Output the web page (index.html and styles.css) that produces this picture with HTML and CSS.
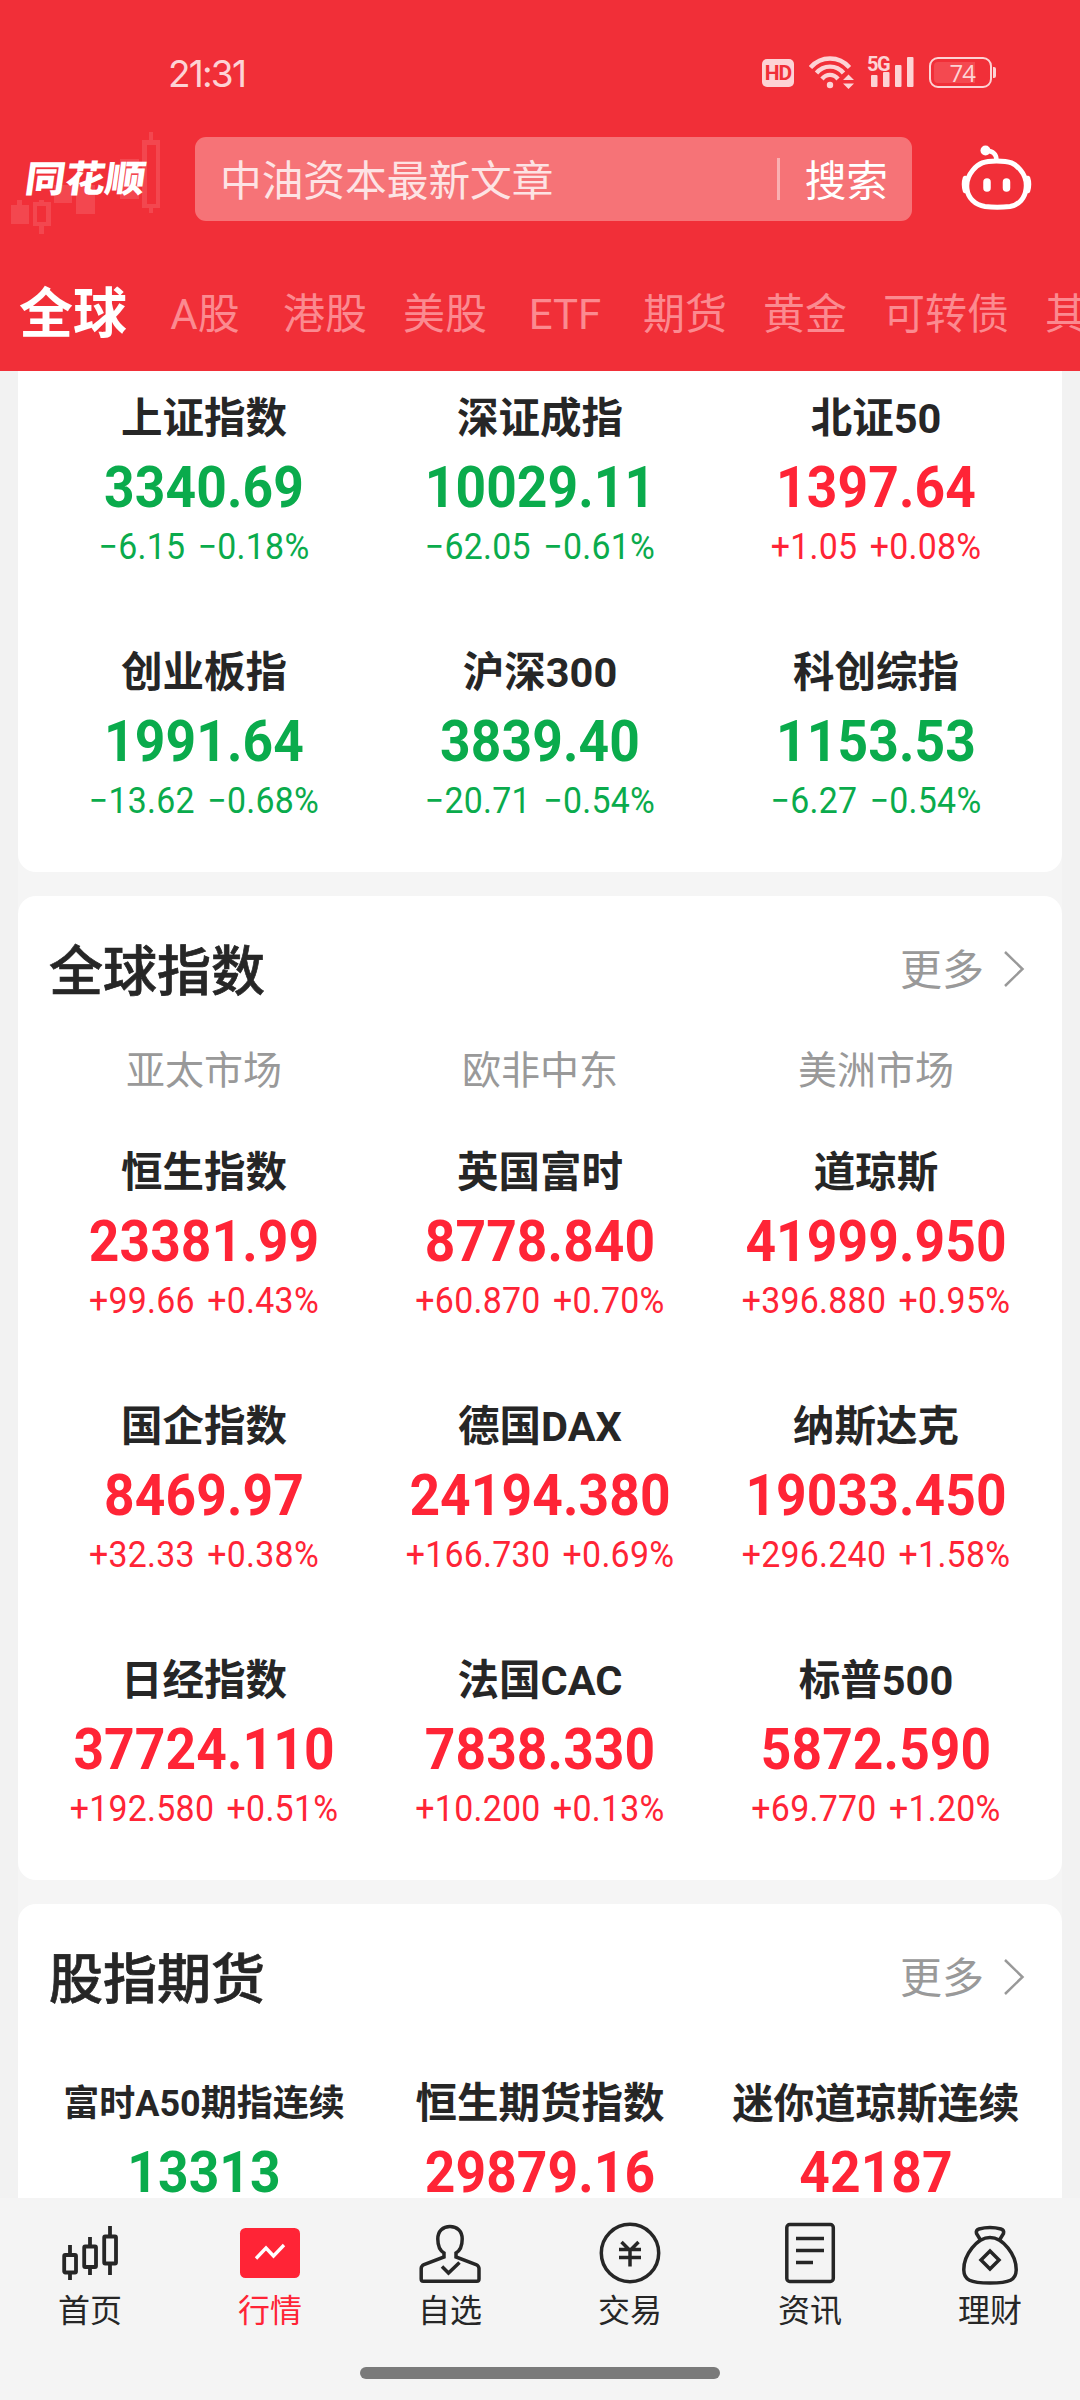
FILE: index.html
```
<!DOCTYPE html>
<html lang="zh-CN">
<head>
    <meta charset="UTF-8">
    <meta name="viewport" content="width=device-width, initial-scale=1.0">
    <title>同花顺 - 行情</title>
    <link rel="stylesheet" href="styles.css">
</head>
<body>

<header class="header">
    <div class="status-bar">
        <span class="time">21:31</span>
        <div class="status-icons">
            <span class="hd">HD</span>
            <svg class="wifi" width="46" height="36" viewBox="0 0 46 36" fill="none" stroke="#fdd3d5" stroke-width="4.400">
                <path d="M1.500 13.500C12 1.500 30 1.500 40.500 13.500"/>
                <path d="M7.500 19C14.500 10.500 27.500 10.500 34.500 19"/>
                <path d="M13 25C17.500 19.500 24.500 19.500 29 25"/>
                <circle cx="21" cy="31" r="3.200" fill="#fdd3d5" stroke="none"/>
                <path d="M34 26L39.500 20.500L45 26ZM34 29.500L39.500 35L45 29.500Z" fill="#fdd3d5" stroke="none"/>
            </svg>
            <svg class="signal" width="48" height="34" viewBox="0 0 48 34" fill="#fdd3d5">
                <text class="signal-text" x="0" y="16.500">5G</text>
                <rect x="4" y="21" width="6.500" height="12" rx="1"/>
                <rect x="16" y="18" width="6.500" height="15" rx="1"/>
                <rect x="28" y="11" width="6.500" height="22" rx="1"/>
                <rect x="40" y="3" width="6.500" height="30" rx="1"/>
            </svg>
            <span class="battery"><span class="battery-level">74</span></span>
        </div>
    </div>

    <div class="search-row">
        <div class="logo">
            <svg class="logo-bg" width="165" height="110" viewBox="0 0 165 110" fill="#f3474f">
                <path d="M11 74h6v-5h5v5h7v19H11z"/>
                <path d="M33 71h6v-2h5v2h7v24h-7v8h-5v-8h-6zM37 75v16h9V75z" fill-rule="evenodd"/>
                <path d="M54 54h18v18H54zM76 54h19v29H76zM120 28h19v40h-19z"/>
                <path d="M142 9h7V1h4v8h7v68h-7v5h-4v-5h-7zM147 14v59h9V14z" fill-rule="evenodd"/>
            </svg>
            <span class="logo-text">同花顺</span>
        </div>
        <div class="search-box">
            <span class="search-hint">中油资本最新文章</span>
            <span class="divider"></span>
            <span class="search-btn">搜索</span>
        </div>
        <svg class="robot" width="72" height="66" viewBox="0 0 72 66" fill="none" stroke="#fff" stroke-width="5">
            <path d="M35.500 16C49 16 54 18 59.500 25C64.500 31 66 37 65 44C64 53 58 60 49 61.500Q36 63 24 61.500C14 60 7 53 6 44C5 37 7 31 12 25C18 18 23 16 35.500 16Z"/>
            <path d="M35.500 15C35.500 9.500 32 6 25 5.500" stroke-width="4.500"/>
            <circle cx="24.500" cy="5.500" r="5" fill="#fff" stroke="none"/>
            <path d="M4 33Q2 39 4 46M67 33Q69 39 67 46" stroke-width="4.500" stroke-linecap="round"/>
            <path d="M26 37v6M45.500 37v6" stroke-width="7.500" stroke-linecap="round"/>
        </svg>
    </div>

    <nav class="tabs">
        <span class="tab active">全球</span>
        <span class="tab">A股</span>
        <span class="tab">港股</span>
        <span class="tab">美股</span>
        <span class="tab">ETF</span>
        <span class="tab">期货</span>
        <span class="tab">黄金</span>
        <span class="tab">可转债</span>
        <span class="tab">其他</span>
    </nav>
</header>

<main class="content">
    <section class="card card-first">
        <div class="grid">
            <div class="item down"><div class="name">上证指数</div><div class="price">3340.69</div><div class="change">−6.15 −0.18%</div></div>
            <div class="item down"><div class="name">深证成指</div><div class="price">10029.11</div><div class="change">−62.05 −0.61%</div></div>
            <div class="item up"><div class="name">北证50</div><div class="price">1397.64</div><div class="change">+1.05 +0.08%</div></div>
            <div class="item down"><div class="name">创业板指</div><div class="price">1991.64</div><div class="change">−13.62 −0.68%</div></div>
            <div class="item down"><div class="name">沪深300</div><div class="price">3839.40</div><div class="change">−20.71 −0.54%</div></div>
            <div class="item down"><div class="name">科创综指</div><div class="price">1153.53</div><div class="change">−6.27 −0.54%</div></div>
        </div>
    </section>

    <section class="card">
        <div class="card-head">
            <h2>全球指数</h2>
            <span class="more"><span>更多</span>
                <svg width="22" height="38" viewBox="0 0 22 38" fill="none" stroke="#999" stroke-width="2.500"><path d="M2 2L19.500 19L2 36"/></svg>
            </span>
        </div>
        <div class="markets"><span>亚太市场</span><span>欧非中东</span><span>美洲市场</span></div>
        <div class="grid">
            <div class="item up"><div class="name">恒生指数</div><div class="price">23381.99</div><div class="change">+99.66 +0.43%</div></div>
            <div class="item up"><div class="name">英国富时</div><div class="price">8778.840</div><div class="change">+60.870 +0.70%</div></div>
            <div class="item up"><div class="name">道琼斯</div><div class="price">41999.950</div><div class="change">+396.880 +0.95%</div></div>
            <div class="item up"><div class="name">国企指数</div><div class="price">8469.97</div><div class="change">+32.33 +0.38%</div></div>
            <div class="item up"><div class="name">德国DAX</div><div class="price">24194.380</div><div class="change">+166.730 +0.69%</div></div>
            <div class="item up"><div class="name">纳斯达克</div><div class="price">19033.450</div><div class="change">+296.240 +1.58%</div></div>
            <div class="item up"><div class="name">日经指数</div><div class="price">37724.110</div><div class="change">+192.580 +0.51%</div></div>
            <div class="item up"><div class="name">法国CAC</div><div class="price">7838.330</div><div class="change">+10.200 +0.13%</div></div>
            <div class="item up"><div class="name">标普500</div><div class="price">5872.590</div><div class="change">+69.770 +1.20%</div></div>
        </div>
    </section>

    <section class="card card-last">
        <div class="card-head">
            <h2>股指期货</h2>
            <span class="more"><span>更多</span>
                <svg width="22" height="38" viewBox="0 0 22 38" fill="none" stroke="#999" stroke-width="2.500"><path d="M2 2L19.500 19L2 36"/></svg>
            </span>
        </div>
        <div class="grid">
            <div class="item down"><div class="name small">富时A50期指连续</div><div class="price">13313</div></div>
            <div class="item up"><div class="name">恒生期货指数</div><div class="price">29879.16</div></div>
            <div class="item up"><div class="name long">迷你道琼斯连续</div><div class="price">42187</div></div>
        </div>
    </section>
</main>

<footer class="footer">
    <nav class="nav">
        <a class="nav-item">
            <svg width="70" height="70" viewBox="0 0 70 70" fill="none" stroke="#262626" stroke-width="3.800">
                <path d="M15 25v10M15 53v7M35 17v9M35 48v7M55 6v10M55 45v10"/>
                <rect x="9.200" y="35" width="11.800" height="17.500" rx="1"/>
                <rect x="29.200" y="26.500" width="11.800" height="20.500" rx="1"/>
                <rect x="49.200" y="16.500" width="11.800" height="27" rx="1"/>
            </svg>
            <span>首页</span>
        </a>
        <a class="nav-item current">
            <svg width="70" height="70" viewBox="0 0 70 70" fill="none">
                <rect x="5" y="8" width="60" height="50" rx="5.500" fill="#ff2436"/>
                <path d="M21 38.500L31 28L38.500 36L49 25" stroke="#fff" stroke-width="3.300"/>
            </svg>
            <span>行情</span>
        </a>
        <a class="nav-item">
            <svg width="70" height="70" viewBox="0 0 70 70" fill="none" stroke="#262626" stroke-width="3.500">
                <path d="M29 37v-4C24 30 22.800 25 22.800 19C22.800 11 28 6.500 35 6.500S47.200 11 47.200 19C47.200 25 46 30 41 33v4L61 44.500Q64 46 64 48.500V59Q64 61.300 61.800 61.300H8.200Q6.200 61.300 6.200 59V48.500Q6.200 46 9 44.500Z"/>
                <path d="M27 46.500L33.500 53L44.500 42.500"/>
            </svg>
            <span>自选</span>
        </a>
        <a class="nav-item">
            <svg width="70" height="70" viewBox="0 0 70 70" fill="none" stroke="#262626" stroke-width="3.500">
                <circle cx="35" cy="33" r="28.700"/>
                <path d="M26.500 22L35 30.500L43.500 22M24 29.500H46M24 37.500H46M35 29V46.500"/>
            </svg>
            <span>交易</span>
        </a>
        <a class="nav-item">
            <svg width="70" height="70" viewBox="0 0 70 70" fill="none" stroke="#262626" stroke-width="3.500">
                <rect x="11.800" y="4.500" width="46.500" height="57" rx="3"/>
                <path d="M21 18.500H49M21 30.500H49M21 42.500H38"/>
            </svg>
            <span>资讯</span>
        </a>
        <a class="nav-item">
            <svg width="70" height="70" viewBox="0 0 70 70" fill="none" stroke="#262626" stroke-width="3.500">
                <path d="M25.500 20L21.500 13.500Q20.500 10 24 9Q35 6 46 9Q49.500 10 48.500 13.500L44.500 20"/>
                <path d="M35 17.500C48 17.500 61.500 35 61.200 50C61 60 55 63 35 63S9 60 8.800 50C8.500 35 22 17.500 35 17.500Z"/>
                <path d="M35 31L44 40L35 49L26 40Z"/>
            </svg>
            <span>理财</span>
        </a>
    </nav>
    <div class="home-bar"></div>
</footer>

</body>
</html>
```
FILE: styles.css
```
* {
    box-sizing: border-box;
}
body {
    margin: 0;
    width: 1080px;
    height: 2400px;
    display: flex;
    flex-direction: column;
    overflow: hidden;
    background: #f5f5f5;
    color: #262626;
    font-family: Roboto, "Noto Sans CJK SC", sans-serif;
}

/* Header */
.header {
    height: 371px;
    flex: none;
    background: #f12f38;
    color: #fff;
    overflow: hidden;
}
.status-bar {
    height: 131px;
    padding: 15px 84px 0 168px;
    display: flex;
    align-items: flex-start;
    justify-content: space-between;
    color: #fdd3d5;
}
.time {
    margin-top: 35px;
    font: 400 37px/48px Inter, sans-serif;
    letter-spacing: -1.8px;
}
.status-icons {
    display: flex;
    margin-top: 39px;
}
.hd {
    width: 32px;
    height: 28px;
    margin: 5px 15px 0 0;
    border-radius: 5px;
    background: #fdd3d5;
    color: #f12f38;
    font: 700 21px/29px Roboto, sans-serif;
    letter-spacing: -1px;
    text-align: center;
}
.wifi {
    margin-right: 12px;
}
.signal {
    margin-right: 14px;
    overflow: visible;
}
.signal-text {
    font: 700 20px Roboto, sans-serif;
    letter-spacing: -1.5px;
}
.battery {
    position: relative;
    width: 63px;
    height: 31px;
    margin: 3px 4px 0 0;
    padding: 3px;
    border: 2px solid #fdd3d5;
    border-radius: 9px;
}
.battery::after {
    content: "";
    position: absolute;
    right: -6px;
    top: 8px;
    width: 3px;
    height: 11px;
    border-radius: 0 2px 2px 0;
    background: #fdd3d5;
}
.battery-level {
    display: block;
    width: 41px;
    height: 21px;
    border-radius: 4px 0 0 4px;
    background: #f44950;
    font: 400 24px/22px "Open Sans", sans-serif;
    letter-spacing: -1px;
    text-align: right;
}
.search-row {
    display: flex;
    height: 110px;
}
.logo {
    position: relative;
    width: 195px;
    flex: none;
}
.logo-bg {
    position: absolute;
    left: 0;
    top: 0;
}
.logo-text {
    position: relative;
    display: block;
    width: 120px;
    margin: 19px 0 0 26px;
    font: 900 40px/52px "Noto Sans CJK SC", sans-serif;
    transform: skewX(-8deg) scaleY(0.92);
}
.search-box {
    width: 717px;
    height: 84px;
    margin-top: 6px;
    padding: 6px 24px 0 25px;
    display: flex;
    align-items: center;
    border-radius: 11px;
    background: #f67377;
    font-size: 41.7px;
    line-height: 78px;
}
.search-hint {
    flex: 1;
    color: #fde3e4;
}
.divider {
    width: 3px;
    height: 42px;
    margin: -6px 25px 0 0;
    background: #fab0b2;
}
.robot {
    margin: 14px 0 0 49px;
}
.tabs {
    display: flex;
    gap: 36px;
    height: 130px;
    padding-left: 19px;
    align-items: center;
    white-space: nowrap;
    font-size: 42px;
    line-height: 60px;
    color: #fb8a90;
}
.tab {
    flex: none;
    min-width: 84px;
    margin-top: 17px;
    text-align: center;
}
.tab.active {
    font-size: 54px;
    font-weight: 700;
    color: #fff;
}

/* Cards */
.content {
    flex: 1;
    min-height: 0;
    overflow: hidden;
    border-left: 18px solid #f2f2f2;
    border-right: 18px solid #f2f2f2;
}
.card {
    margin-bottom: 24px;
    padding: 0 18px 47px;
    border-radius: 18px;
    background: #fff;
}
.card-first {
    padding-top: 16px;
    border-radius: 0 0 18px 18px;
}
.card-head {
    height: 148px;
    padding: 0 19px 0 13px;
    display: flex;
    align-items: center;
    justify-content: space-between;
}
.card-head h2 {
    margin: 6px 0 0;
    font-size: 54px;
    font-weight: 500;
    line-height: 80px;
    -webkit-text-stroke: 0.7px #262626;
}
.more {
    display: flex;
    align-items: center;
    gap: 19px;
    font-size: 42px;
    line-height: 60px;
    color: #999;
}
.more > span {
    margin-top: 2px;
}
.more svg {
    margin-top: -3px;
}
.markets {
    display: grid;
    grid-template-columns: repeat(3, 336px);
    padding-top: 2px;
    margin-bottom: 45px;
    font-size: 39px;
    line-height: 50px;
    text-align: center;
    color: #999;
}
.grid {
    display: grid;
    grid-template-columns: repeat(3, 336px);
    row-gap: 70px;
}
.card-last .grid {
    margin-top: 20px;
}
.item {
    text-align: center;
    white-space: nowrap;
}
.name {
    height: 64px;
    font-size: 41.5px;
    font-weight: 700;
    line-height: 64px;
}
.name.small {
    font-size: 36px;
}
.name.long {
    font-size: 41px;
}
/* narrow numerals */
.price {
    font-size: 58px;
    font-weight: 700;
    line-height: 73px;
    letter-spacing: 0.1px;
    transform: scaleX(0.92);
}
.change {
    font-size: 36px;
    line-height: 47px;
    letter-spacing: 0.3px;
    word-spacing: 4px;
    transform: scaleX(0.94);
}
.up .price,
.up .change {
    color: #ff2436;
}
.down .price,
.down .change {
    color: #0aab4c;
}

/* Bottom navigation */
.footer {
    height: 202px;
    flex: none;
    background: #f4f4f4;
}
.nav {
    display: flex;
    height: 169px;
    padding-top: 22px;
}
.nav-item {
    flex: 1;
    display: flex;
    flex-direction: column;
    align-items: center;
    font-size: 32px;
    line-height: 43px;
}
.nav-item.current {
    color: #ff2436;
}
.home-bar {
    width: 360px;
    height: 12px;
    margin: 0 auto;
    border-radius: 6px;
    background: #7a7a7a;
}
```
